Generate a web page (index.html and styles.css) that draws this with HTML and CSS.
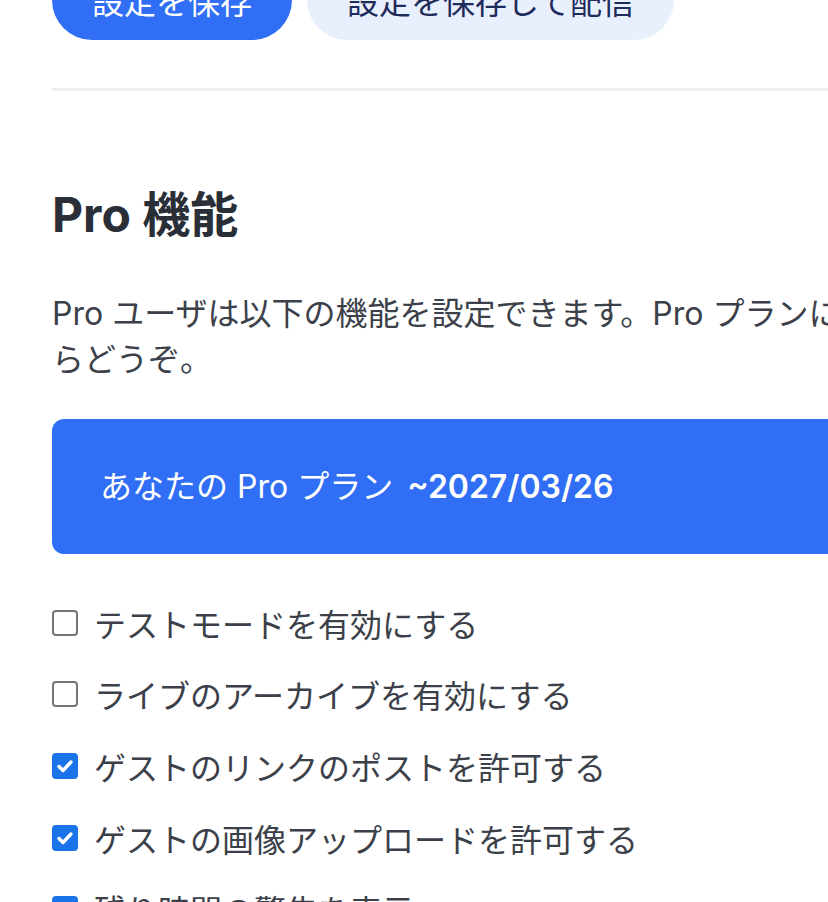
FILE: index.html
```html
<!DOCTYPE html>
<html lang="ja">

<head>
    <meta charset="UTF-8">
    <meta name="viewport" content="width=device-width, initial-scale=1.0">
    <title>設定</title>
    <link rel="stylesheet" href="styles.css">
</head>

<body>
    <main class="page">
        <div class="actions">
            <button class="btn btn-primary">設定を保存</button>
            <button class="btn btn-secondary">設定を保存して配信</button>
        </div>

        <hr class="divider">

        <section class="pro">
            <h2>Pro 機能</h2>
            <p class="lead">Pro ユーザは以下の機能を設定できます。Pro プランについてはこちらからどうぞ。</p>

            <div class="plan">あなたの Pro プラン <span class="plan-date">~2027/03/26</span></div>

            <ul class="options">
                <li><label><input type="checkbox"> テストモードを有効にする</label></li>
                <li><label><input type="checkbox"> ライブのアーカイブを有効にする</label></li>
                <li><label><input type="checkbox" checked> ゲストのリンクのポストを許可する</label></li>
                <li><label><input type="checkbox" checked> ゲストの画像アップロードを許可する</label></li>
                <li><label><input type="checkbox" checked> 残り時間の警告を表示</label></li>
            </ul>
        </section>
    </main>
</body>

</html>
```

FILE: styles.css
```css
html,
body {
    overflow-x: hidden;
}

body {
    margin: 0;
    background: #ffffff;
    color: #3b4049;
    font-family: Inter, "Noto Sans CJK JP", sans-serif;
    font-size: 32px;
}

.page {
    width: 1060px;
    padding: 0 52px;
}

.actions {
    display: flex;
    gap: 15px;
    margin-top: -40px;
}

.btn {
    height: 80px;
    padding: 0 40px;
    border: none;
    border-radius: 40px;
    font-family: inherit;
    font-size: 32px;
    cursor: pointer;
}

.btn-primary {
    background: #2f6ef5;
    color: #ffffff;
}

.btn-secondary {
    background: #e8effd;
    color: #1e2b5b;
}

.divider {
    margin: 48px 0 0;
    border: none;
    border-top: 3px solid #eff0f2;
}

.pro h2 {
    margin: 95px 0 0;
    font-size: 48px;
    font-weight: 700;
    line-height: 1.2;
    color: #2a2f37;
}

.lead {
    margin: 47px 0 0;
    line-height: 46px;
}

.plan {
    margin-top: 36px;
    padding: 44px 48px;
    line-height: 47px;
    background: #2f6ef5;
    color: #ffffff;
    border-radius: 12px;
}

.plan-date {
    margin-left: 5px;
    font-weight: 600;
}

.options {
    list-style: none;
    margin: 45px 0 0;
    padding: 0;
    display: flex;
    flex-direction: column;
    gap: 23.7px;
}

.options label {
    display: flex;
    align-items: center;
    height: 48px;
    cursor: pointer;
}

.options input {
    appearance: none;
    -webkit-appearance: none;
    width: 26px;
    height: 26px;
    margin: 0 16px 0 0;
    border: 2px solid #767676;
    border-radius: 4px;
    background: #ffffff;
    flex-shrink: 0;
}

.options input:checked {
    border-color: #1a73e8;
    background: #1a73e8 url("data:image/svg+xml,%3Csvg xmlns='http://www.w3.org/2000/svg' viewBox='0 0 22 22'%3E%3Cpath d='M5 11.5l4 4L17 7' fill='none' stroke='white' stroke-width='3.4' stroke-linecap='round' stroke-linejoin='round'/%3E%3C/svg%3E") center / 22px 22px no-repeat;
}
```
